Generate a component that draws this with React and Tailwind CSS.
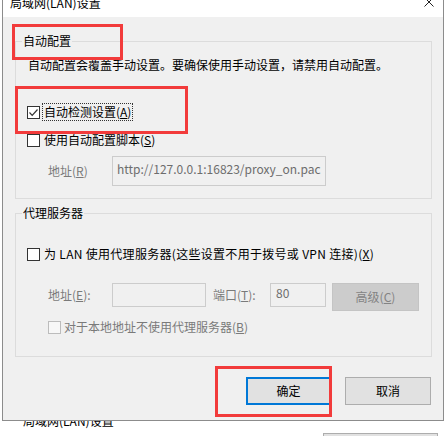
import React from 'react'

const FONT = { fontFamily: '"Noto Sans CJK SC", "Noto Sans", sans-serif' }

function Box({ checked, disabled }) {
  return (
    <span className={`w-[13px] h-[13px] shrink-0 border flex items-center justify-center ${disabled ? 'border-[#bcbcbc] bg-[#f7f7f7]' : 'border-[#333] bg-white'}`}>
      {checked && (
        <svg width="11" height="11" viewBox="0 0 11 11">
          <polyline points="1.5,5.5 4.2,8.3 9.5,2.5" fill="none" stroke="#333" strokeWidth="1.2" />
        </svg>
      )}
    </span>
  )
}

function Group({ title, className, children }) {
  return (
    <fieldset className={`ml-[12px] w-[417px] border border-[#dcdcdc] ${className}`}>
      <legend className="ml-[6px] px-[1px] leading-[14px]">{title}</legend>
      {children}
    </fieldset>
  )
}

export default function App() {
  return (
    <div className="w-[446px] h-[436px] bg-white overflow-hidden relative text-[12px] text-black" style={FONT}>
      <div className="ml-[2px] w-[442px] border-x border-b border-[#8c8c8c]">
        {/* title bar */}
        <div className="h-[17px] bg-white flex justify-between">
          <div className="ml-[7px] mt-[-3px] leading-[12px]">局域网(LAN)设置</div>
          <svg width="10" height="10" viewBox="0 0 10 10" className="mr-[9px] mt-[-3px]">
            <path d="M0.5 0.5 L9.5 9.5 M9.5 0.5 L0.5 9.5" stroke="#222" strokeWidth="1" />
          </svg>
        </div>

        <div className="bg-[#f0f0f0] h-[403px] pt-[17px]">
          <Group title="自动配置" className="pb-[12px]">
            <div className="ml-[12px] mt-[9px] leading-[16px]">自动配置会覆盖手动设置。要确保使用手动设置，请禁用自动配置。</div>
            <div className="ml-[11px] mt-[30px] h-[18px] flex items-center">
              <Box checked />
              <span className="ml-[2px] px-[1px] h-[18px] leading-[16px] border border-dotted border-[#333]">自动检测设置(<u>A</u>)</span>
            </div>
            <div className="ml-[11px] mt-[10px] h-[18px] flex items-center">
              <Box />
              <span className="ml-[4px] leading-[16px]">使用自动配置脚本(<u>S</u>)</span>
            </div>
            <div className="ml-[32px] mt-[7px] flex items-center">
              <span className="w-[64px] text-[#7a7a7a] leading-[16px]">地址(<u>R</u>)</span>
              <div className="w-[214px] h-[30px] border border-[#cccccc] pl-[4px] pt-[4px] leading-[16px] text-[#6d6d6d]">
                http://127.0.0.1:16823/proxy_on.pac
              </div>
            </div>
          </Group>

          <Group title="代理服务器" className="mt-[7px] pb-[20px]">
            <div className="ml-[11px] mt-[25px] h-[18px] flex items-center">
              <Box />
              <span className="ml-[4px] leading-[16px] tracking-[0.3px]">为 LAN 使用代理服务器(这些设置不用于拨号或 VPN 连接)(<u>X</u>)</span>
            </div>
            <div className="ml-[32px] mt-[20px] flex items-start text-[#7a7a7a]">
              <span className="w-[64px] h-[24px] flex items-center">地址(<u>E</u>):</span>
              <div className="w-[94px] h-[24px] border border-[#cccccc]" />
              <span className="ml-[7px] w-[57px] h-[24px] flex items-center">端口(<u>T</u>):</span>
              <div className="w-[56px] h-[24px] border border-[#cccccc] pl-[5px] pt-[1px] leading-[16px] text-[#6d6d6d]">80</div>
              <div className="ml-[6px] w-[87px] h-[28px] bg-[#cccccc] border border-[#c4c4c4] flex items-center justify-center text-[#838383]">
                高级(<u>C</u>)
              </div>
            </div>
            <div className="ml-[32px] mt-[7px] h-[18px] flex items-center">
              <Box disabled />
              <span className="ml-[3px] leading-[16px] text-[#7a7a7a]">对于本地地址不使用代理服务器(<u>B</u>)</span>
            </div>
          </Group>

          <div className="mt-[20px] mr-[12px] flex justify-end gap-[14px]">
            <button className="w-[85px] h-[28px] border-2 border-[#0078d7] bg-[#e1e1e1] leading-[16px]">确定</button>
            <button className="w-[86px] h-[28px] border border-[#adadad] bg-[#e1e1e1] leading-[16px]">取消</button>
          </div>
        </div>
      </div>

      {/* window behind the dialog */}
      <div className="h-[15px] overflow-hidden flex justify-between items-start">
        <div className="ml-[23px] mt-[-6px] leading-[12px]">局域网(LAN)设置</div>
        <div className="mr-[8px] mt-[12px] w-[115px] h-[10px] border border-[#adadad] bg-[#e1e1e1]" />
      </div>

      {/* red annotation boxes */}
      <div className="absolute left-[12px] top-[24px] w-[111px] h-[36px] border-[3px] border-[#f23b3b]" />
      <div className="absolute left-[15px] top-[86px] w-[173px] h-[48px] border-[3px] border-[#f23b3b]" />
      <div className="absolute left-[215px] top-[366px] w-[117px] h-[51px] border-[3px] border-[#f23b3b]" />
    </div>
  )
}
